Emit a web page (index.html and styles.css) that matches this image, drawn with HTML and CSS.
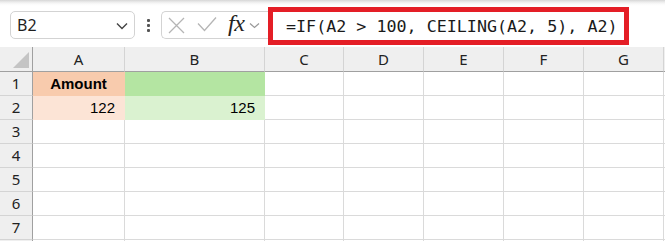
FILE: index.html
```html
<!DOCTYPE html>
<html>
<head>
<meta charset="utf-8">
<link rel="stylesheet" href="styles.css">
</head>
<body>
<div class="toolbar">
  <div class="namebox">
    <span class="name">B2</span>
    <svg class="chev" width="12" height="8" viewBox="0 0 12 8"><path d="M1 1.5 L6 6.5 L11 1.5" fill="none" stroke="#444" stroke-width="1.4"/></svg>
  </div>
  <div class="dots"><i></i><i></i><i></i></div>
  <div class="iconbox">
    <svg class="ico-x" width="17" height="17" viewBox="0 0 17 17"><path d="M1 1 L16 16 M16 1 L1 16" stroke="#b5b5b5" stroke-width="1.3" fill="none"/></svg>
    <svg class="ico-check" width="20" height="17" viewBox="0 0 20 17"><path d="M1 7.5 L7.5 14.5 L19 1.5" stroke="#b5b5b5" stroke-width="1.3" fill="none"/></svg>
    <span class="fx">fx</span>
    <svg class="chev-s" width="11" height="7" viewBox="0 0 11 7"><path d="M1 1.5 L5.5 5.5 L10 1.5" fill="none" stroke="#999" stroke-width="1.2"/></svg>
  </div>
  <div class="formula">=IF(A2 &gt; 100, CEILING(A2, 5), A2)</div>
</div>
<div class="grid">
  <div class="corner"><span class="tri"></span></div>
  <div class="ch">A</div><div class="ch">B</div><div class="ch">C</div><div class="ch">D</div><div class="ch">E</div><div class="ch">F</div><div class="ch">G</div><div class="ch edge"></div>

  <div class="rh">1</div>
  <div class="c a1">Amount</div><div class="c b1"></div><div class="c"></div><div class="c"></div><div class="c"></div><div class="c"></div><div class="c"></div><div class="c edge"></div>

  <div class="rh">2</div>
  <div class="c a2 num">122</div><div class="c b2 num">125</div><div class="c"></div><div class="c"></div><div class="c"></div><div class="c"></div><div class="c"></div><div class="c edge"></div>

  <div class="rh">3</div>
  <div class="c"></div><div class="c"></div><div class="c"></div><div class="c"></div><div class="c"></div><div class="c"></div><div class="c"></div><div class="c edge"></div>

  <div class="rh">4</div>
  <div class="c"></div><div class="c"></div><div class="c"></div><div class="c"></div><div class="c"></div><div class="c"></div><div class="c"></div><div class="c edge"></div>

  <div class="rh">5</div>
  <div class="c"></div><div class="c"></div><div class="c"></div><div class="c"></div><div class="c"></div><div class="c"></div><div class="c"></div><div class="c edge"></div>

  <div class="rh">6</div>
  <div class="c"></div><div class="c"></div><div class="c"></div><div class="c"></div><div class="c"></div><div class="c"></div><div class="c"></div><div class="c edge"></div>

  <div class="rh">7</div>
  <div class="c"></div><div class="c"></div><div class="c"></div><div class="c"></div><div class="c"></div><div class="c"></div><div class="c"></div><div class="c edge"></div>

  <div class="rh"></div>
  <div class="c"></div><div class="c"></div><div class="c"></div><div class="c"></div><div class="c"></div><div class="c"></div><div class="c"></div><div class="c edge"></div>
</div>
</body>
</html>
```

FILE: styles.css
```css
* { box-sizing: border-box; }
html, body { margin: 0; padding: 0; }
body {
  width: 665px;
  height: 241px;
  overflow: hidden;
  background: #fff;
  font-family: "Noto Sans", "Liberation Sans", sans-serif;
}
.toolbar {
  height: 47px;
  display: flex;
  align-items: flex-start;
  background: linear-gradient(#d6d6d6 0, #ececec 2px, #fafafa 4px, #fff 6px);
}
.namebox {
  margin: 11px 0 0 10px;
  width: 125px;
  height: 28px;
  border: 1px solid #d3d3d3;
  border-radius: 5px;
  background: #fff;
  display: flex;
  align-items: center;
  justify-content: space-between;
  padding: 0 6px 0 6px;
}
.name {
  font-size: 16px;
  color: #1f1f1f;
  line-height: 1;
}
.chev { margin-top: 1px; }
.dots {
  margin: 19px 0 0 12px;
  width: 3px;
  display: flex;
  flex-direction: column;
  gap: 2px;
}
.dots i {
  display: block;
  width: 3px;
  height: 3px;
  background: #555;
  border-radius: 1px;
}
.iconbox {
  margin: 11px 0 0 11px;
  width: 107px;
  height: 28px;
  border: 1px solid #d3d3d3;
  border-right: none;
  border-radius: 5px 0 0 5px;
  background: #fff;
  display: flex;
  align-items: center;
  padding-left: 5px;
}
.ico-x { margin-left: 1px; }
.ico-check { margin-left: 12px; margin-top: -1px; }
.fx {
  margin-left: 11px;
  font-family: "Liberation Serif", serif;
  font-style: italic;
  font-size: 24px;
  color: #222;
  line-height: 1;
  margin-top: -4px;
  letter-spacing: -0.5px;
}
.chev-s { margin-left: 5px; }
.formula {
  margin-top: 7px;
  width: 361px;
  height: 38px;
  border: 5px solid #e41e26;
  background: #fff;
  font-family: "DejaVu Sans Mono", "Liberation Mono", monospace;
  font-size: 16.7px;
  color: #1a1a1a;
  line-height: 28px;
  padding-left: 13px;
  white-space: nowrap;
}
.grid {
  display: grid;
  grid-template-columns: 33px 92px 140px 79px 80px 80px 80px 80px 1fr;
  grid-template-rows: 25px repeat(8, 24px);
}
.corner, .ch {
  background: #efefef;
  border-bottom: 1px solid #a0a0a0;
  border-right: 1px solid #d4d4d4;
}
.corner {
  border-right: 1px solid #a0a0a0;
  position: relative;
}
.tri {
  position: absolute;
  right: 3px;
  bottom: 3px;
  width: 0;
  height: 0;
  border-left: 16px solid transparent;
  border-bottom: 16px solid #c4c4c4;
}
.ch {
  font-size: 15px;
  color: #222;
  text-align: center;
  line-height: 24px;
}
.ch.edge { border-right: none; }
.rh {
  background: #efefef;
  border-right: 1px solid #a0a0a0;
  border-bottom: 1px solid #d4d4d4;
  font-size: 15px;
  color: #222;
  text-align: center;
  line-height: 23px;
}
.c {
  border-right: 1px solid #dadada;
  border-bottom: 1px solid #dadada;
  font-family: "Liberation Sans", Arial, sans-serif;
  font-size: 15px;
  color: #000;
  line-height: 23px;
}
.c.edge { border-right: none; }
.num { text-align: right; padding-right: 9px; }
.a1 {
  background: #f8cbad;
  border-color: #f8cbad;
  font-weight: bold;
  text-align: center;
}
.b1 { background: #b4e5a2; border-color: #b4e5a2; }
.a2 { background: #fce4d6; border-color: #fce4d6; }
.b2 { background: #daf2d0; border-color: #daf2d0; }
```
